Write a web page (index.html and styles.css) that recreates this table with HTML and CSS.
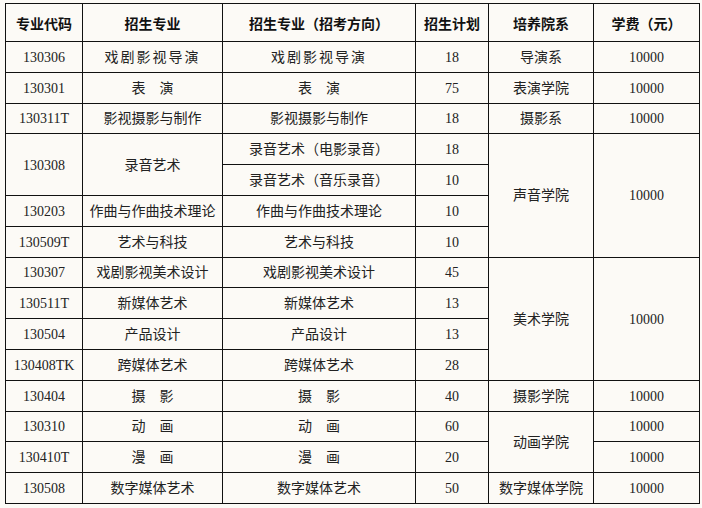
FILE: index.html
```html
<!DOCTYPE html>
<html lang="zh-CN">
<head>
<meta charset="utf-8">
<title>招生专业</title>
<link rel="stylesheet" href="styles.css">
</head>
<body>
<table class="plan">
  <colgroup>
    <col class="c1"><col class="c2"><col class="c3"><col class="c4"><col class="c5"><col class="c6">
  </colgroup>
  <thead>
    <tr class="head">
      <th>专业代码</th><th>招生专业</th><th>招生专业（招考方向）</th><th>招生计划</th><th>培养院系</th><th>学费（元）</th>
    </tr>
  </thead>
  <tbody>
    <tr><td>130306</td><td class="wide">戏剧影视导演</td><td class="wide">戏剧影视导演</td><td>18</td><td>导演系</td><td>10000</td></tr>
    <tr><td>130301</td><td>表　演</td><td>表　演</td><td>75</td><td>表演学院</td><td>10000</td></tr>
    <tr><td>130311T</td><td>影视摄影与制作</td><td>影视摄影与制作</td><td>18</td><td>摄影系</td><td>10000</td></tr>
    <tr><td rowspan="2">130308</td><td rowspan="2">录音艺术</td><td>录音艺术（电影录音）</td><td>18</td><td rowspan="4">声音学院</td><td rowspan="4">10000</td></tr>
    <tr><td>录音艺术（音乐录音）</td><td>10</td></tr>
    <tr><td>130203</td><td>作曲与作曲技术理论</td><td>作曲与作曲技术理论</td><td>10</td></tr>
    <tr><td>130509T</td><td>艺术与科技</td><td>艺术与科技</td><td>10</td></tr>
    <tr><td>130307</td><td>戏剧影视美术设计</td><td>戏剧影视美术设计</td><td>45</td><td rowspan="4">美术学院</td><td rowspan="4">10000</td></tr>
    <tr><td>130511T</td><td>新媒体艺术</td><td>新媒体艺术</td><td>13</td></tr>
    <tr><td>130504</td><td>产品设计</td><td>产品设计</td><td>13</td></tr>
    <tr><td>130408TK</td><td>跨媒体艺术</td><td>跨媒体艺术</td><td>28</td></tr>
    <tr><td>130404</td><td>摄　影</td><td>摄　影</td><td>40</td><td>摄影学院</td><td>10000</td></tr>
    <tr><td>130310</td><td>动　画</td><td>动　画</td><td>60</td><td rowspan="2">动画学院</td><td>10000</td></tr>
    <tr><td>130410T</td><td>漫　画</td><td>漫　画</td><td>20</td><td>10000</td></tr>
    <tr><td>130508</td><td>数字媒体艺术</td><td>数字媒体艺术</td><td>50</td><td>数字媒体学院</td><td>10000</td></tr>
  </tbody>
</table>
</body>
</html>
```

FILE: styles.css
```css
html, body {
  margin: 0;
  padding: 0;
  background: #fcfaf6;
}
body {
  padding: 3px 0 0 5px;
  font-family: "Liberation Serif", "Noto Sans CJK SC", serif;
  color: #222;
}
.plan {
  border-collapse: collapse;
  table-layout: fixed;
  width: 694px;
}
.c1 { width: 77px; }
.c2 { width: 140px; }
.c3 { width: 193px; }
.c4 { width: 73px; }
.c5 { width: 105px; }
.c6 { width: 106px; }
.plan th, .plan td {
  border: 1px solid #111;
  text-align: center;
  vertical-align: middle;
  white-space: nowrap;
  overflow: hidden;
  line-height: 16px;
}
.plan th {
  height: 37px;
  padding: 0;
  font-family: "Noto Sans CJK SC", sans-serif;
  font-weight: 700;
  font-size: 14px;
  color: #111;
}
.plan td {
  height: 27.8px;
  padding: 2px 0 0 0;
  font-size: 14px;
}
.wide {
  letter-spacing: 2px;
}
```
